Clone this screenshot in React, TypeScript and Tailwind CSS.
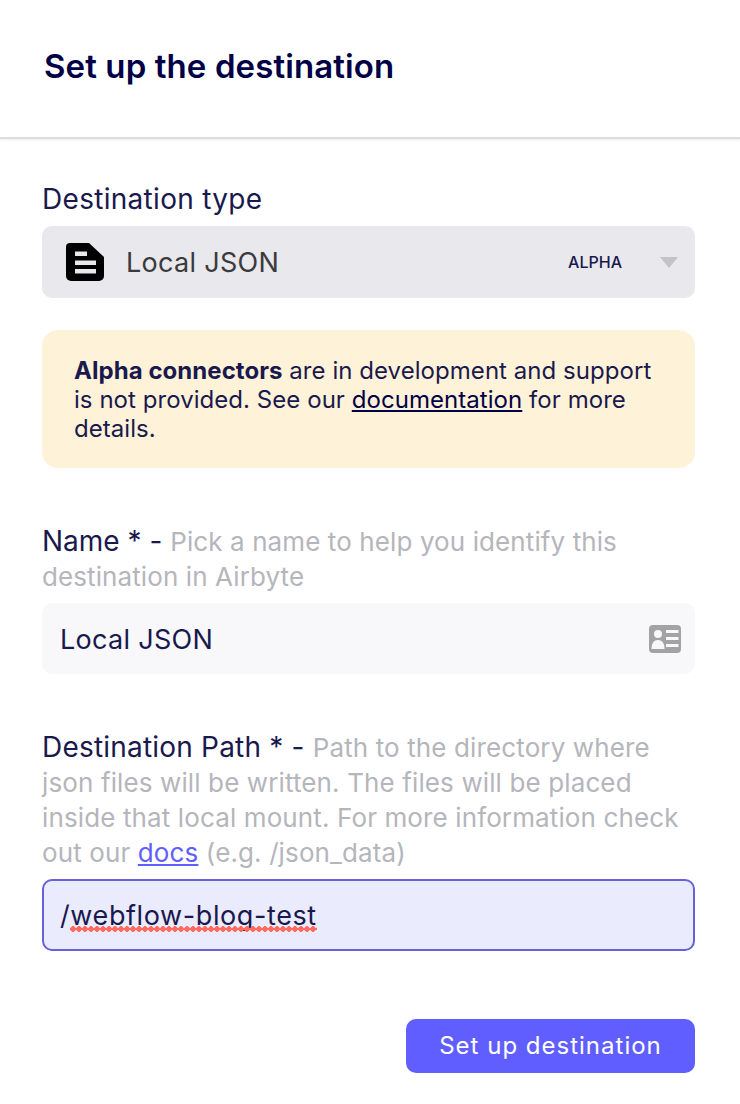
import React from "react";

function FileIcon() {
  return (
    <svg width="38" height="38" viewBox="0 0 38 38" className="shrink-0">
      <path d="M4 0H23L38 14V33a5 5 0 0 1-5 5H5a5 5 0 0 1-5-5V4a4 4 0 0 1 4-4Z" fill="#000" />
      <rect x="9" y="8.5" width="12" height="4.5" fill="#e6e6eb" />
      <rect x="9" y="17.5" width="21" height="4.5" fill="#e6e6eb" />
      <rect x="9" y="26" width="21" height="4.5" fill="#e6e6eb" />
    </svg>
  );
}

function IdIcon() {
  return (
    <svg width="32" height="28" viewBox="0 0 32 28" className="shrink-0">
      <rect x="0" y="0" width="32" height="28" rx="4" fill="#a3a3a6" />
      <circle cx="9" cy="9" r="4" fill="#f8f8fa" />
      <path d="M2.5 24c0-6 2.5-9 6.5-9s6.5 3 6.5 9Z" fill="#f8f8fa" />
      <rect x="17" y="5" width="12.5" height="3" fill="#f8f8fa" />
      <rect x="17" y="12" width="12.5" height="3" fill="#f8f8fa" />
      <rect x="17" y="19" width="12.5" height="3" fill="#f8f8fa" />
    </svg>
  );
}

export default function App() {
  return (
    <div className="w-[740px] h-[1104px] bg-white overflow-hidden font-['Inter',sans-serif] text-[#1a194d]">
      <header className="h-[139px] pl-[44px] pt-[46px] border-b-2 border-[#dcdcdf] shadow-[0_1px_2px_rgba(0,0,0,0.08)]">
        <h1 className="text-[33px] leading-[40px] font-semibold tracking-[0.1px] text-[#010047]">Set up the destination</h1>
      </header>

      <main className="pl-[42px] pr-[45px] pt-[42px]">
        <label className="block text-[28px] leading-[36px] tracking-[0.3px]">Destination type</label>
        <div className="mt-[9px] h-[72px] rounded-[10px] bg-[#e8e8ed] flex items-center pl-[24px] pr-[17px]">
          <FileIcon />
          <span className="ml-[22px] pt-[2px] text-[27px] text-[#3a3a3e] tracking-[0.3px]">Local JSON</span>
          <span className="ml-auto text-[16px] font-medium text-[#1a194d]">ALPHA</span>
          <span className="ml-[38px] w-0 h-0 border-x-[9px] border-x-transparent border-t-[11px] border-t-[#c3c3c8]" />
        </div>

        <div className="mt-[32px] h-[138px] rounded-[16px] bg-[#fef3d9] pl-[32px] pr-[30px] pt-[26px] text-[24px] leading-[29px] tracking-[0.05px]">
          <strong className="font-bold">Alpha connectors</strong> are in development and support is not provided. See our <a className="underline text-[#010047]">documentation</a> for more details.
        </div>

        <p className="mt-[56px] text-[26px] leading-[35px] text-[#b5b5bc] tracking-[0.1px]">
          <span className="text-[28px] tracking-normal text-[#1a194d]">Name * - </span>Pick a name to help you identify this destination in Airbyte
        </p>
        <div className="mt-[9px] h-[71px] rounded-[10px] bg-[#f8f8fa] flex items-center pl-[18px] pr-[14px] justify-between">
          <span className="pt-[4px] text-[27px] tracking-[0.3px]">Local JSON</span>
          <IdIcon />
        </div>

        <p className="mt-[56px] text-[26px] leading-[35px] text-[#b5b5bc] tracking-[0.12px]">
          <span className="text-[28px] tracking-[0.2px] text-[#1a194d]">Destination Path * - </span>Path to the directory where json files will be written. The files will be placed inside that local mount. For more information check out our <a className="underline text-[#615eff]">docs</a> (e.g. /json_data)
        </p>
        <div className="mt-[9px] h-[72px] rounded-[10px] bg-[#ebebfe] border-2 border-[#6661d6] flex items-center pl-[16px]">
          <span className="relative pt-[2px] text-[27px] tracking-[0.6px]">
            /webflow-blog-test
            <span className="absolute left-[10px] right-0 bottom-[4px] h-[6px] bg-[radial-gradient(circle,#ff6a5f_2.6px,transparent_3px)] bg-[length:6px_6px]" />
          </span>
        </div>

        <div className="mt-[68px] flex justify-end">
          <button className="w-[289px] h-[54px] rounded-[10px] bg-[#615eff] text-white text-[24px] tracking-[1px]">Set up destination</button>
        </div>
      </main>
    </div>
  );
}
